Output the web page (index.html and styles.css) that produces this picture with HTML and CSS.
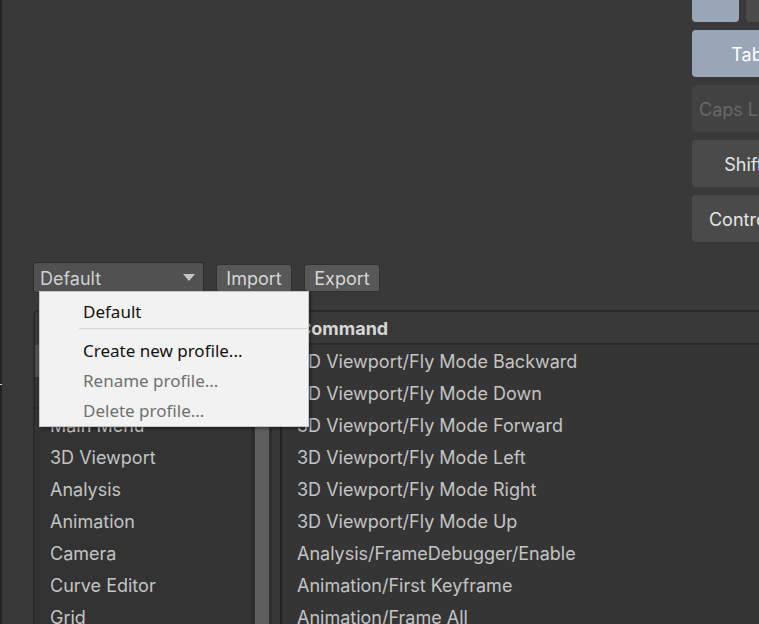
FILE: index.html
```html
<!DOCTYPE html>
<html>
<head>
<meta charset="utf-8">
<link rel="stylesheet" href="styles.css">
</head>
<body>
<div class="app">
  <div class="edge"><span class="edge-mark"></span></div>
  <div class="main">
    <div class="keyboard">
      <div class="krow krow-first">
        <div class="key key-sel key-num"></div>
        <div class="key key-num2"></div>
      </div>
      <div class="krow"><div class="key key-sel key-tab">Tab</div></div>
      <div class="krow"><div class="key key-off key-caps">Caps Lock</div></div>
      <div class="krow"><div class="key key-shift">Shift</div></div>
      <div class="krow"><div class="key key-ctrl">Control</div></div>
    </div>
    <div class="toolbar">
      <div class="dropdown">
        <span class="dd-label">Default</span>
        <svg class="arrow" width="12" height="7" viewBox="0 0 12 7"><path d="M0 0 L12 0 L6 7 Z" fill="#c4c4c4"/></svg>
      </div>
      <button class="btn">Import</button>
      <button class="btn">Export</button>
    </div>
    <div class="panels">
      <div class="cat-panel">
        <div class="cat-list">
          <div class="cat-head"></div>
          <div class="cat-row selected">All Unity Commands</div>
          <div class="cat-row short">Binding Conflicts</div>
          <div class="cat-sep"></div>
          <div class="cat-row">Main Menu</div>
          <div class="cat-row">3D Viewport</div>
          <div class="cat-row">Analysis</div>
          <div class="cat-row">Animation</div>
          <div class="cat-row">Camera</div>
          <div class="cat-row">Curve Editor</div>
          <div class="cat-row">Grid</div>
        </div>
        <div class="scrolltrack"><div class="thumb"></div></div>
      </div>
      <div class="splitter"></div>
      <div class="cmd-panel">
        <div class="cmd-head">Command</div>
        <div class="cmd-row">3D Viewport/Fly Mode Backward</div>
        <div class="cmd-row">3D Viewport/Fly Mode Down</div>
        <div class="cmd-row">3D Viewport/Fly Mode Forward</div>
        <div class="cmd-row">3D Viewport/Fly Mode Left</div>
        <div class="cmd-row">3D Viewport/Fly Mode Right</div>
        <div class="cmd-row">3D Viewport/Fly Mode Up</div>
        <div class="cmd-row">Analysis/FrameDebugger/Enable</div>
        <div class="cmd-row">Animation/First Keyframe</div>
        <div class="cmd-row">Animation/Frame All</div>
      </div>
    </div>
  </div>
</div>
<div class="menu">
  <div class="menu-item">Default</div>
  <div class="menu-sep"></div>
  <div class="menu-item">Create new profile...</div>
  <div class="menu-item disabled">Rename profile...</div>
  <div class="menu-item disabled">Delete profile...</div>
</div>
</body>
</html>
```

FILE: styles.css
```css
html, body {
  margin: 0;
  padding: 0;
}
body {
  width: 759px;
  height: 624px;
  overflow: hidden;
  background: #393939;
  font-family: Inter, "Liberation Sans", sans-serif;
  font-size: 18px;
  color: #c4c4c4;
  position: relative;
}
.app {
  display: flex;
  height: 624px;
}
.edge {
  width: 2px;
  flex: none;
  background: #232323;
  position: relative;
}
.edge-mark {
  position: absolute;
  left: 0;
  top: 384px;
  width: 2px;
  height: 1px;
  background: #d0d0d0;
}
.main {
  flex: 1;
  display: flex;
  flex-direction: column;
  min-width: 0;
}
.keyboard {
  height: 262px;
  box-sizing: border-box;
  padding-left: 690px;
  display: flex;
  flex-direction: column;
  gap: 8px;
  overflow: hidden;
  white-space: nowrap;
}
.krow {
  display: flex;
  gap: 7px;
  flex: none;
}
.krow-first {
  margin-top: -25px;
}
.key {
  flex: none;
  height: 47px;
  box-sizing: border-box;
  border-radius: 4px;
  background: #4a4a4a;
  color: #e6e6e6;
  display: flex;
  align-items: center;
  justify-content: center;
  font-size: 18px;
  padding-top: 1px;
}
.key-sel {
  background: #98a6b8;
  color: #ffffff;
}
.key-num { width: 47px; }
.key-num2 { width: 60px; background: #4b4b4b; }
.key-tab { width: 110px; }
.key-caps { width: 104px; }
.key-shift { width: 103px; }
.key-ctrl { width: 96px; }
.key-off {
  background: #424242;
  color: #686868;
}
.toolbar {
  display: flex;
  align-items: center;
  gap: 12px;
  height: 31px;
  margin-left: 31px;
  flex: none;
}
.dropdown {
  width: 171px;
  height: 31px;
  box-sizing: border-box;
  border: 1px solid #2c2c2c;
  border-radius: 3px;
  background: #515151;
  color: #d0d0d0;
  display: flex;
  align-items: center;
  justify-content: space-between;
  padding: 1px 8px 0 6px;
}
.arrow {
  display: block;
  margin-top: -1px;
}
.btn {
  width: 76px;
  height: 28px;
  box-sizing: border-box;
  border: 1px solid #303030;
  border-radius: 3px;
  background: #585858;
  color: #d6d6d6;
  font-family: Inter, "Liberation Sans", sans-serif;
  font-size: 18px;
  padding: 1px 0 0 0;
  line-height: 26px;
}
.panels {
  display: flex;
  margin-top: 17px;
  margin-left: 31px;
  flex: 1;
  min-height: 0;
}
.cat-panel {
  width: 239px;
  flex: none;
  display: flex;
  border-top: 2px solid #2a2a2a;
  border-left: 2px solid #2a2a2a;
  border-top-left-radius: 5px;
  box-sizing: border-box;
  overflow: hidden;
}
.cat-list {
  flex: 1;
  background: #333333;
  min-width: 0;
}
.cat-head {
  height: 33px;
  background: #393939;
}
.cat-row {
  height: 32px;
  line-height: 34px;
  padding-left: 15px;
  white-space: nowrap;
  color: #c4c4c4;
  overflow: hidden;
}
.cat-row.short {
  height: 30px;
  line-height: 32px;
}
.cat-row.selected {
  background: #4d4d4d;
}
.cat-sep {
  height: 2px;
  background: #2a2a2a;
}
.scrolltrack {
  width: 21px;
  flex: none;
  box-sizing: border-box;
  background: #2d2d2d;
  padding: 35px 3px 0 4px;
}
.thumb {
  height: 100%;
  background: #5e5e5e;
}
.splitter {
  width: 8px;
  flex: none;
  background: #373737;
}
.cmd-panel {
  flex: 1;
  border-left: 2px solid #232323;
  border-top: 2px solid #2a2a2a;
  background: #353535;
  min-width: 0;
  white-space: nowrap;
}
.cmd-head {
  height: 31px;
  line-height: 33px;
  border-bottom: 2px solid #2a2a2a;
  background: #393939;
  padding-left: 16px;
  font-weight: 700;
  color: #d6d6d6;
  overflow: hidden;
}
.cmd-row {
  height: 32px;
  line-height: 34px;
  padding-left: 15px;
  color: #c4c4c4;
  overflow: hidden;
}
.menu {
  position: absolute;
  left: 39px;
  top: 291px;
  width: 270px;
  height: 136px;
  box-sizing: border-box;
  border: 1px solid #c6c6c6;
  background: #f2f2f2;
  padding: 4px 0 1px 0;
  font-family: "Noto Sans", "Open Sans", sans-serif;
  font-size: 17px;
  color: #111111;
  box-shadow: 2px 2px 3px rgba(0, 0, 0, 0.35);
}
.menu-item {
  height: 30px;
  line-height: 32px;
  padding-left: 43px;
  white-space: nowrap;
  overflow: hidden;
}
.menu-item.disabled {
  color: #707070;
}
.menu-sep {
  height: 1px;
  background: #d6d6d6;
  margin: 2px 1px 6px 39px;
}
```
